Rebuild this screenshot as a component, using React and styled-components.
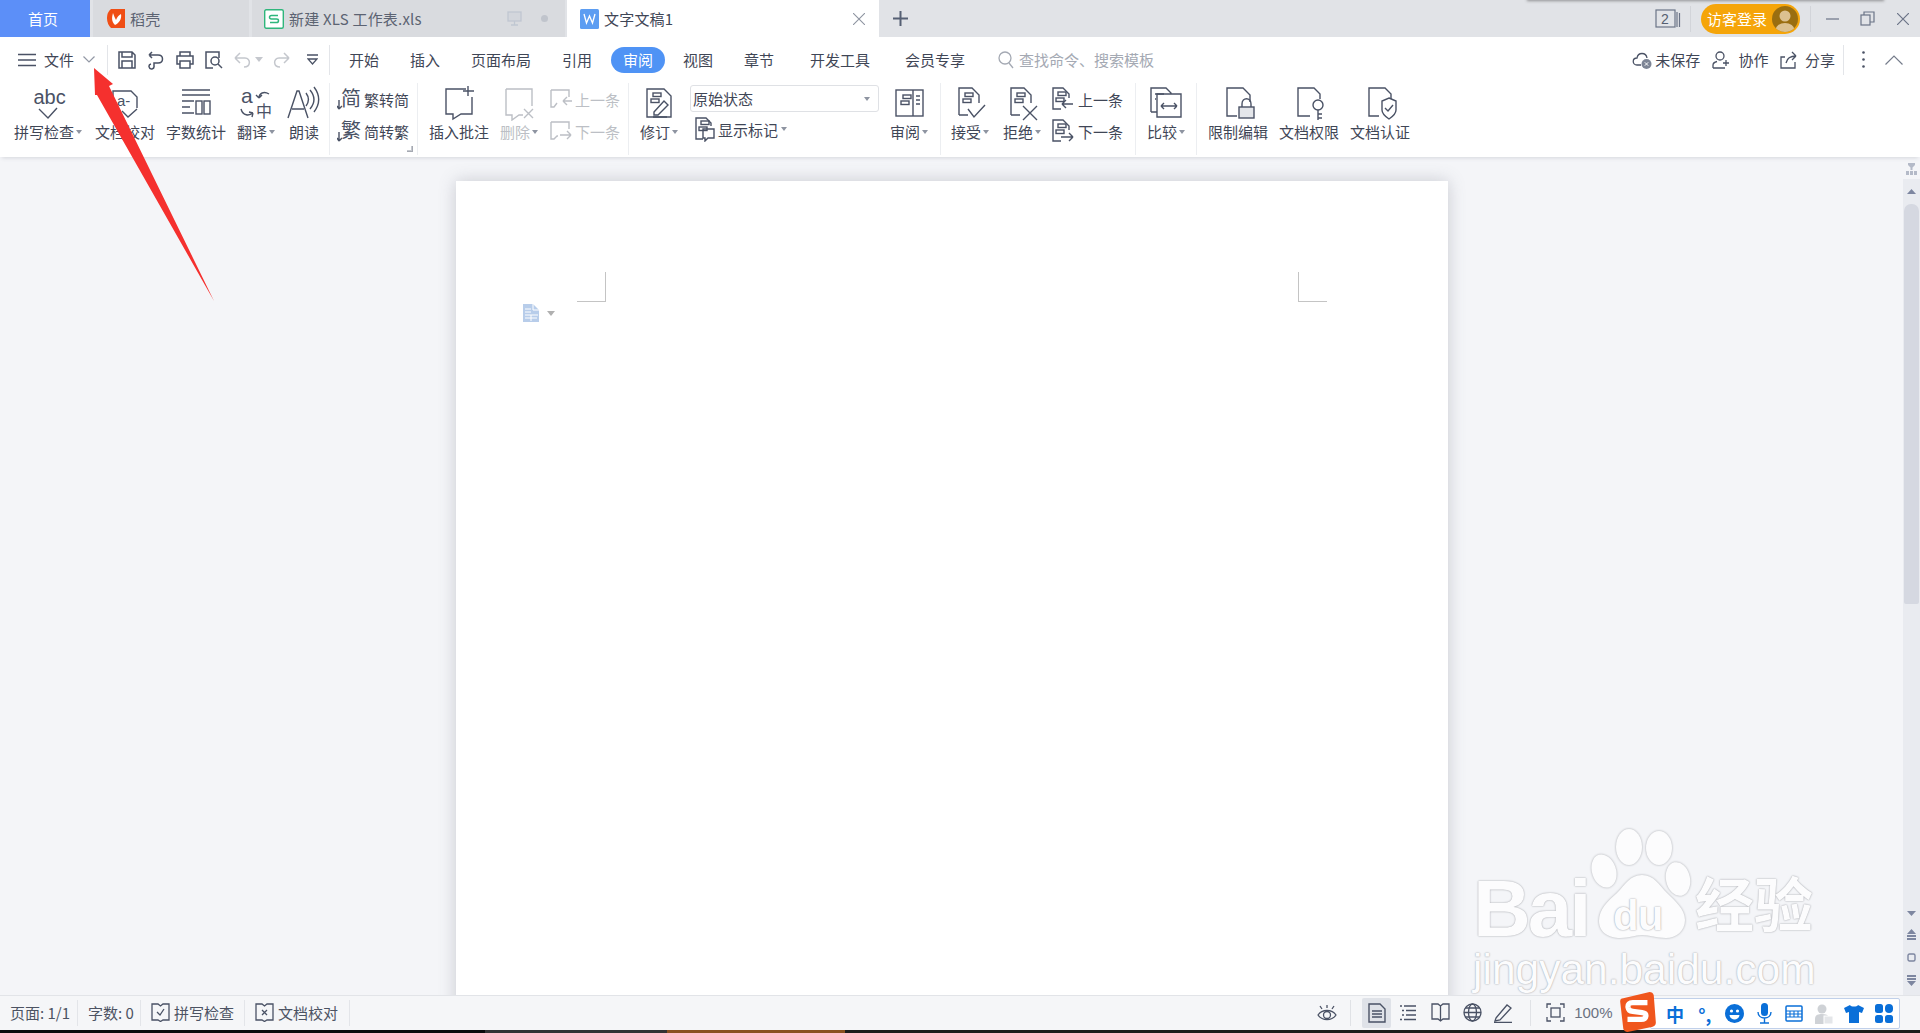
import React from 'react';
import styled, { createGlobalStyle } from 'styled-components';

const INK = '#4a5265';
const FAINT = '#bcbfc5';
const CJK = '"Noto Sans CJK SC", "Liberation Sans", sans-serif';

const GlobalStyle = createGlobalStyle`
  html, body { margin: 0; padding: 0; background: #f4f5f8; }
  body { font-family: ${CJK}; overflow: hidden; }
  svg { display: block; flex: none; }
`;

const Frame = styled.div`
  position: relative;
  width: 1920px;
  height: 1033px;
  display: flex;
  flex-direction: column;
  overflow: hidden;
  color: #3f4656;
  font-size: 15px;
`;

/* ---------- tab bar ---------- */
const TabBar = styled.div`
  height: 37px;
  flex: none;
  display: flex;
  align-items: stretch;
  background: #e1e3e7;
`;
const HomeTab = styled.div`
  width: 90px;
  box-sizing: border-box;
  padding-right: 4px;
  margin-right: 3px;
  background: #5c8ff8;
  color: #fff;
  display: flex;
  align-items: center;
  justify-content: center;
`;
const Tab = styled.div`
  width: ${p => p.$w}px;
  margin-right: ${p => p.$gap}px;
  padding-left: ${p => p.$pad}px;
  box-sizing: border-box;
  background: ${p => (p.$active ? '#fff' : '#d9dbdf')};
  color: ${p => (p.$active ? '#3f4656' : '#5c6372')};
  display: flex;
  align-items: center;
  gap: 5px;
  letter-spacing: 0.2px;
  white-space: nowrap;
`;
const TabTail = styled.div`
  margin-left: auto;
  display: flex;
  align-items: center;
  gap: ${p => p.$gap || 0}px;
  padding-right: ${p => p.$pad || 0}px;
`;
const NewTab = styled.div`
  margin-left: 14px;
  display: flex;
  align-items: center;
`;
const WindowTools = styled.div`
  margin-left: auto;
  display: flex;
  align-items: center;
`;
const BarDivider = styled.div`
  width: 1px;
  height: 26px;
  background: #d2d4d9;
  margin: 0 ${p => p.$right}px 0 ${p => p.$left}px;
`;
const LoginPill = styled.div`
  width: 99px;
  height: 30px;
  box-sizing: border-box;
  border-radius: 15px;
  background: #f5a50a;
  color: #fff;
  padding: 0 2px 0 6px;
  display: flex;
  align-items: center;
  justify-content: space-between;
`;
const Avatar = styled.div`
  width: 26px;
  height: 26px;
  border-radius: 50%;
  overflow: hidden;
`;
const WinButton = styled.div`
  width: 35px;
  display: flex;
  justify-content: center;
`;
const TopShadow = styled.div`
  position: absolute;
  left: 1527px;
  top: -3px;
  width: 357px;
  height: 3px;
  box-shadow: 0 1px 3px rgba(60, 60, 60, 0.5);
`;

/* ---------- menu row ---------- */
const MenuRow = styled.div`
  height: 41px;
  flex: none;
  box-sizing: border-box;
  background: #fff;
  display: flex;
  align-items: center;
  padding: 4px 17px 0 18px;
  white-space: nowrap;
`;
const MenuDivider = styled.div`
  width: 1px;
  height: 30px;
  background: #e3e5e9;
  margin-left: ${p => p.$left}px;
  margin-right: ${p => p.$right || 0}px;
`;
const FileLabel = styled.span`
  margin: 0 9px 0 8px;
`;
const QuickButton = styled.div`
  width: ${p => p.$w || 29}px;
  margin-left: ${p => p.$left || 0}px;
  display: flex;
  justify-content: center;
`;
const MenuTab = styled.div`
  width: ${p => p.$w}px;
  text-align: center;
`;
const ActivePill = styled.div`
  width: 54px;
  height: 26px;
  line-height: 26px;
  margin-left: 7px;
  border-radius: 13px;
  text-align: center;
  background: #4f93f5;
  color: #fff;
`;
const SearchBox = styled.div`
  margin-left: 21px;
  display: flex;
  align-items: center;
  gap: 5px;
  color: #a4a9b3;
`;
const MenuRight = styled.div`
  margin-left: auto;
  display: flex;
  align-items: center;
`;
const MenuAction = styled.div`
  display: flex;
  align-items: center;
  gap: 3px;
  margin-right: ${p => p.$right}px;
`;
const CollapseIcon = styled.svg`
  margin-left: 20px;
`;

/* ---------- ribbon ---------- */
const Ribbon = styled.div`
  height: 79px;
  flex: none;
  box-sizing: border-box;
  background: #fff;
  padding-left: 8px;
  display: flex;
  align-items: flex-start;
  position: relative;
  z-index: 2;
  box-shadow: 0 3px 4px -2px rgba(90, 95, 110, 0.2);
  white-space: nowrap;
`;
const RibbonButton = styled.div`
  width: ${p => p.$w}px;
  height: 72px;
  padding-top: 7px;
  display: flex;
  flex-direction: column;
  align-items: center;
  color: ${p => (p.$off ? FAINT : 'inherit')};
`;
const RibbonIcon = styled.div`
  height: 36px;
  display: flex;
  align-items: center;
  justify-content: center;
`;
const RibbonLabel = styled.div`
  height: 22px;
  line-height: 22px;
  display: flex;
  align-items: center;
  gap: 2px;
`;
const Caret = styled.i`
  width: 0;
  height: 0;
  border-left: 3.5px solid transparent;
  border-right: 3.5px solid transparent;
  border-top: 4px solid #8e94a1;
`;
const RibbonDivider = styled.div`
  width: 1px;
  height: 72px;
  margin-top: 5px;
  margin-left: ${p => p.$left || 0}px;
  background: #eceef1;
`;
const SmallColumn = styled.div`
  position: relative;
  width: ${p => p.$w}px;
  box-sizing: border-box;
  padding: 5px 0 0 ${p => p.$pad || 0}px;
`;
const SmallRow = styled.div`
  height: 32px;
  display: flex;
  align-items: center;
  gap: ${p => p.$gap ?? 3}px;
  color: ${p => (p.$off ? FAINT : 'inherit')};
`;
const CornerMark = styled.i`
  position: absolute;
  right: 4px;
  bottom: -5px;
  width: 5px;
  height: 5px;
  border-right: 1px solid #a5a9b2;
  border-bottom: 1px solid #a5a9b2;
  box-shadow: inset -1px -1px 0 #c5c8ce;
`;
const StateColumn = styled.div`
  width: 191px;
  box-sizing: border-box;
  padding: 7px 0 0 1px;
`;
const StateSelect = styled.div`
  width: 189px;
  height: 27px;
  box-sizing: border-box;
  border: 1px solid #dfe1e5;
  border-radius: 3px;
  padding: 0 8px 0 2px;
  display: flex;
  align-items: center;
  justify-content: space-between;
`;
const MarkRow = styled.div`
  height: 34px;
  padding-left: 3px;
  display: flex;
  align-items: center;
  gap: 3px;
`;

/* ---------- workspace ---------- */
const Workspace = styled.div`
  flex: 1;
  min-height: 0;
  display: flex;
  background: #f4f5f8;
`;
const PageArea = styled.div`
  flex: 1;
  display: flex;
  justify-content: center;
  padding-top: 24px;
  overflow: hidden;
`;
const Page = styled.div`
  position: relative;
  width: 992px;
  height: 1400px;
  background: #fff;
  box-shadow: 0 0 16px rgba(90, 95, 110, 0.28);
`;
const CornerLeft = styled.div`
  position: absolute;
  left: 121px;
  top: 91px;
  width: 28px;
  height: 29px;
  border-right: 1px solid #c4c4c4;
  border-bottom: 1px solid #c4c4c4;
`;
const CornerRight = styled.div`
  position: absolute;
  right: 121px;
  top: 91px;
  width: 28px;
  height: 29px;
  border-left: 1px solid #c4c4c4;
  border-bottom: 1px solid #c4c4c4;
`;
const ParaMark = styled.div`
  position: absolute;
  left: 67px;
  top: 123px;
  display: flex;
  align-items: center;
  gap: 8px;
`;
const ScrollColumn = styled.div`
  width: 17px;
  flex: none;
  display: flex;
  flex-direction: column;
  align-items: center;
`;
const SplitMark = styled.div`
  height: 22px;
  padding-top: 6px;
  box-sizing: border-box;
`;
const ScrollTrack = styled.div`
  flex: 1;
  width: 100%;
  background: #e9ebf0;
  display: flex;
  flex-direction: column;
  align-items: center;
`;
const ScrollArrow = styled.div`
  height: ${p => p.$h}px;
  display: flex;
  align-items: center;
  justify-content: center;
`;
const Thumb = styled.div`
  width: 15px;
  height: 400px;
  margin-bottom: ${p => p.$below}px;
  border-radius: 7px 7px 2px 2px;
  background: #d5d8e1;
`;

/* ---------- status bar ---------- */
const StatusBar = styled.div`
  height: 35px;
  flex: none;
  box-sizing: border-box;
  border-top: 1px solid #e2e4e8;
  background: #f5f6f8;
  padding-bottom: 1px;
  display: flex;
  align-items: center;
  color: #4c5363;
  white-space: nowrap;
`;
const StatusCell = styled.div`
  width: ${p => p.$w}px;
  height: 26px;
  box-sizing: border-box;
  padding-left: 10px;
  display: flex;
  align-items: center;
  gap: 4px;
  border-right: 1px solid #e3e5e9;
`;
const ViewTools = styled.div`
  margin-left: auto;
  width: 603px;
  display: flex;
  align-items: center;
`;
const ViewButton = styled.div`
  width: ${p => p.$w || 32}px;
  height: 30px;
  display: flex;
  align-items: center;
  justify-content: center;
  border-radius: 2px;
  background: ${p => (p.$active ? '#dfe2e8' : 'transparent')};
`;
const StatusDivider = styled.div`
  width: 1px;
  height: 26px;
  background: #e0e2e6;
  margin: 0 ${p => p.$right}px 0 ${p => p.$left}px;
`;
const Zoom100 = styled.span`
  margin-left: 5px;
  color: #6a7180;
  font-family: "Liberation Sans", sans-serif;
  font-size: 15px;
`;
const TaskStrip = styled.div`
  height: 3px;
  flex: none;
  display: flex;
  background: #0a0a0a;
`;
const StripPiece = styled.div`
  width: ${p => p.$w}px;
  background: ${p => p.$color};
`;

/* ---------- overlays ---------- */
const ImePanel = styled.div`
  position: absolute;
  left: 1650px;
  top: 998px;
  width: 250px;
  height: 31px;
  box-sizing: border-box;
  background: #fff;
  border: 1px solid #c0d0ea;
  border-radius: 2px;
  padding-left: 9px;
  display: flex;
  align-items: center;
  color: #0a6fd8;
  font-weight: 700;
  font-size: 18px;
`;
const ImeItem = styled.div`
  width: 30px;
  display: flex;
  justify-content: center;
`;
const SogouLogo = styled.div`
  position: absolute;
  left: 1618px;
  top: 991px;
`;
const RedArrow = styled.svg`
  position: absolute;
  left: 0;
  top: 0;
  z-index: 5;
`;
const Watermark = styled.div`
  position: absolute;
  left: 1470px;
  top: 825px;
  width: 360px;
  height: 165px;
  z-index: 3;
  color: #fcfcfd;
  text-shadow: 0 0 2px #a9abb0, 0 0 1px #b9bbc0;
  font-family: "Liberation Sans", sans-serif;
  font-weight: 700;
  line-height: 1;
`;
const PawDrawing = styled.svg`
  position: absolute;
  left: 0;
  top: 0;
  filter: drop-shadow(0 0 1.2px #a9abb0);
`;
const MarkBai = styled.span`
  position: absolute;
  left: 3px;
  top: 44px;
  font-size: 80px;
  letter-spacing: -3px;
`;
const MarkDu = styled.span`
  position: absolute;
  left: 143px;
  top: 70px;
  font-size: 42px;
  letter-spacing: -1px;
`;
const MarkCn = styled.span`
  position: absolute;
  left: 225px;
  top: 47px;
  font-family: ${CJK};
  font-size: 59px;
`;
const MarkUrl = styled.span`
  position: absolute;
  left: 3px;
  top: 124px;
  font-size: 42.5px;
  font-weight: 400;
`;

/* ---------- icons ---------- */
const Line = ({ w = 24, h = 24, c = INK, sw = 1.4, children }) => (
  <svg width={w} height={h} viewBox={`0 0 ${w} ${h}`} fill="none" stroke={c} strokeWidth={sw}>
    {children}
  </svg>
);
const GlyphText = ({ x, y, size, children, fill = INK }) => (
  <text x={x} y={y} fontSize={size} fill={fill} stroke="none" fontFamily={'"Liberation Sans", "Noto Sans CJK SC", sans-serif'}>
    {children}
  </text>
);
const Chip = ({ x, y, c = INK }) => (
  <>
    <rect x={x} y={y} width="8" height="3.5" stroke={c} />
    <rect x={x - 2} y={y + 6} width="8" height="3.5" stroke={c} />
  </>
);
const DocBody = ({ x = 9, r = 29, c = INK }) => (
  <path d={`M${x} 30V3H${r - 7}L${r} 10V18M${x} 30H${x + 9}`} stroke={c} />
);

const SpellIcon = () => (
  <Line w={40} h={36}>
    <GlyphText x={5.5} y={19} size={20}>abc</GlyphText>
    <path d="M11 24L20 33L29 23" />
  </Line>
);
const ProofIcon = () => (
  <Line w={40} h={36}>
    <path d="M11 30H8V6H26L32 12V23" />
    <GlyphText x={12} y={21} size={15}>a-</GlyphText>
    <path d="M17 26L23 32L32 24" />
  </Line>
);
const CountIcon = () => (
  <Line w={40} h={36}>
    <path d="M6 5H34M6 10H34M6 16H18M6 22H14M6 28H18" />
    <rect x="20" y="16" width="6" height="13" />
    <rect x="28" y="16" width="6" height="13" />
  </Line>
);
const TranslateIcon = () => (
  <Line w={40} h={36}>
    <GlyphText x={5} y={18} size={21}>a</GlyphText>
    <path d="M23 13C23 8 28 6 33 9M23 13L20 10M23 13L26 10M5 24C7 31 13 31 17 28M17 28L13 27M17 28L16 32" />
    <GlyphText x={20} y={32} size={16}>中</GlyphText>
  </Line>
);
const ReadIcon = () => (
  <Line w={40} h={36}>
    <path d="M4 33L13 6H15L24 33M8 24H20" />
    <path d="M22 8C25 12 25 17 22 21M26 5C31 11 31 18 26 24M30 2C36 10 36 19 30 27" />
  </Line>
);
const ConvertIcon = ({ glyph }) => (
  <Line w={24} h={26}>
    <GlyphText x={4} y={20} size={20}>{glyph}</GlyphText>
    <path d="M2 14V23M2 23L0 20M2 23L5 20" />
  </Line>
);
const CommentAddIcon = ({ c = INK }) => (
  <Line w={40} h={36} c={c}>
    <path d="M27 4H7V29H14V34L22 29H33V12" />
    <path d="M29 1V11M24 6H35" />
  </Line>
);
const CommentDelIcon = ({ c = FAINT }) => (
  <Line w={40} h={36} c={c}>
    <path d="M7 4H33V21M7 4V30H13V35L20 30H24" />
    <path d="M25 24L34 33M34 24L25 33" />
  </Line>
);
const PrevCommentIcon = ({ c = FAINT }) => (
  <Line w={26} h={24} c={c}>
    <path d="M3 3H21V10M3 3V20H6L9 16M15 14H24M15 14L19 10M15 14L19 18" />
  </Line>
);
const NextCommentIcon = ({ c = FAINT }) => (
  <Line w={26} h={24} c={c}>
    <path d="M3 3H21V10M3 3V20H6L9 17H10M12 16H23M23 16L19 12M23 16L19 20" />
  </Line>
);
const TrackIcon = () => (
  <Line w={40} h={36}>
    <path d="M8 32V4H25L32 11V32Z" />
    <Chip x={14} y={8} />
    <path d="M15 27L25 16L29 20L19 30H15ZM14 32H28" />
  </Line>
);
const PaneIcon = () => (
  <Line w={40} h={36}>
    <rect x="7" y="5" width="27" height="26" />
    <path d="M24 5V31M27 11H31M27 15H31M27 19H31" />
    <Chip x={14} y={10} />
  </Line>
);
const AcceptIcon = () => (
  <Line w={40} h={36}>
    <DocBody />
    <Chip x={15} y={8} />
    <path d="M18 24L24 32L35 20" />
  </Line>
);
const RejectIcon = () => (
  <Line w={40} h={36}>
    <DocBody />
    <Chip x={15} y={8} />
    <path d="M21 21L35 35M35 21L21 35" />
  </Line>
);
const DocPrevIcon = () => (
  <Line w={26} h={26}>
    <path d="M12 23H4V2H14L20 8V12" />
    <Chip x={9} y={6} />
    <path d="M13 18H24M13 18L17 14M13 18L17 22" />
  </Line>
);
const DocNextIcon = () => (
  <Line w={26} h={26}>
    <path d="M12 23H4V2H14L20 8V12" />
    <Chip x={9} y={6} />
    <path d="M12 19H24M24 19L20 15M24 19L20 23" />
  </Line>
);
const CompareIcon = () => (
  <Line w={40} h={36}>
    <path d="M5 27V3H20L25 8V9M11 27H5M11 27V9H35V32H11Z" />
    <path d="M9 9H18M9 14H10M15 21H31M15 21L18 18M15 21L18 24M31 21L28 18M31 21L28 24" />
  </Line>
);
const LockIcon = () => (
  <Line w={40} h={36}>
    <path d="M19 31H9V3H25L32 10V17" />
    <path d="M24 22V19C24 12 33 12 33 19V22" />
    <rect x="21" y="22" width="15" height="11" fill="#e4e6ea" />
  </Line>
);
const KeyIcon = () => (
  <Line w={40} h={36}>
    <path d="M21 31H9V3H25L31 9V14" />
    <circle cx="29" cy="20" r="5" />
    <path d="M29 25V35M29 29H33M29 33H33" />
  </Line>
);
const ShieldIcon = () => (
  <Line w={40} h={36}>
    <path d="M19 31H9V3H25L31 9V14" />
    <path d="M29 13L36 16V25C36 29 32 32 29 34C26 32 22 29 22 25V16Z" />
    <path d="M25 23L28 26L33 20" />
  </Line>
);
const MarkIcon = () => (
  <Line w={22} h={26}>
    <path d="M10 23H3V2H13L18 7V10" />
    <Chip x={8} y={5} />
    <path d="M10 13H21V22H15L12 25V22H10Z" />
  </Line>
);
const CaretSmall = ({ c = '#9aa0ab' }) => (
  <svg width="8" height="5" viewBox="0 0 8 5"><path d="M0 0H8L4 5Z" fill={c} /></svg>
);

const SogouS = () => (
  <svg width="40" height="42" viewBox="0 0 38 40">
    <path d="M5 7L30 1Q33 1 34 4L36 30Q36 33 33 34L9 39Q6 39 5 36L2 10Q2 7 5 7Z" fill="#f0561d" />
    <path d="M28 11H14Q9 11 9.500 15.500Q10 19 14 19.500L23 20.500Q27 21 26.500 24Q26 27 22 27H9" fill="none" stroke="#fff" strokeWidth="5" />
  </svg>
);

const App = () => (
  <Frame>
    <GlobalStyle />

    <TabBar>
      <HomeTab>首页</HomeTab>
      <Tab $w={156} $gap={3} $pad={14}>
        <svg width="18" height="19" viewBox="0 0 18 19">
          <path d="M4 0H18V19H4Q0 15 0 9Q0 3 4 0Z" fill="#f04e15" />
          <path d="M8 16C4 12 5 8 6 4C7 7 8 9 9 11C10 8 12 6 14 5C15 10 12 14 8 16Z" fill="#fff" />
        </svg>
        稻壳
      </Tab>
      <Tab $w={313} $gap={2} $pad={12}>
        <svg width="20" height="20" viewBox="0 0 20 20">
          <rect x="0.700" y="0.700" width="18.600" height="18.600" rx="1.500" fill="#fff" stroke="#2fb67c" strokeWidth="1.400" />
          <path d="M14 6.500H7.500Q5.500 6.500 5.500 8.300Q5.500 10 7.500 10H12.500Q14.500 10 14.500 11.700Q14.500 13.500 12.500 13.500H6" fill="none" stroke="#2fb67c" strokeWidth="1.500" />
        </svg>
        新建 XLS 工作表.xls
        <TabTail $gap={19} $pad={17}>
          <svg width="15" height="15" viewBox="0 0 15 15" fill="none" stroke="#c0c7d2" strokeWidth="1.300">
            <rect x="1" y="1" width="13" height="9" fill="#d3d6dc" />
            <path d="M7.500 10V14M4 14H11" />
          </svg>
          <svg width="7" height="7" viewBox="0 0 7 7"><circle cx="3.500" cy="3.500" r="3.500" fill="#c0c4cc" /></svg>
        </TabTail>
      </Tab>
      <Tab $w={312} $gap={0} $pad={13} $active>
        <svg width="19" height="20" viewBox="0 0 19 20">
          <rect width="19" height="20" rx="1.500" fill="#5c9df2" />
          <path d="M4 5L6.500 14L9.500 7L12.500 14L15 5" fill="none" stroke="#fff" strokeWidth="1.300" />
        </svg>
        文字文稿1
        <TabTail $pad={14}>
          <svg width="12" height="12" viewBox="0 0 12 12" stroke="#8e94a1" strokeWidth="1.100"><path d="M0 0L12 12M12 0L0 12" /></svg>
        </TabTail>
      </Tab>
      <NewTab>
        <svg width="15" height="15" viewBox="0 0 15 15" stroke="#566074" strokeWidth="2"><path d="M7.500 0V15M0 7.500H15" /></svg>
      </NewTab>
      <WindowTools>
        <svg width="26" height="19" viewBox="0 0 26 19" fill="none" stroke="#6b7487" strokeWidth="1.200">
          <rect x="1" y="1" width="19" height="17" />
          <path d="M22 3V18M24.500 4V18" />
          <GlyphText x={6} y={15} size={14} fill="#555e70">2</GlyphText>
        </svg>
        <BarDivider $left={9} $right={10} />
        <LoginPill>
          访客登录
          <Avatar>
            <svg width="26" height="26" viewBox="0 0 26 26">
              <rect width="26" height="26" fill="#9a6e10" />
              <circle cx="13" cy="10" r="5.500" fill="#dcc190" />
              <ellipse cx="13" cy="24" rx="9.500" ry="7" fill="#dcc190" />
            </svg>
          </Avatar>
        </LoginPill>
        <BarDivider $left={10} $right={4} />
        <WinButton>
          <svg width="13" height="2" viewBox="0 0 13 2"><path d="M0 1H13" stroke="#6b7487" strokeWidth="1.200" /></svg>
        </WinButton>
        <WinButton>
          <svg width="15" height="15" viewBox="0 0 15 15" fill="none" stroke="#6b7487" strokeWidth="1.200">
            <rect x="1" y="4" width="9" height="10" />
            <path d="M4 4V1H14V11H10" />
          </svg>
        </WinButton>
        <WinButton>
          <svg width="12" height="12" viewBox="0 0 12 12" stroke="#6b7487" strokeWidth="1.200"><path d="M0 0L12 12M12 0L0 12" /></svg>
        </WinButton>
      </WindowTools>
    </TabBar>
    <TopShadow />

    <MenuRow>
      <svg width="18" height="14" viewBox="0 0 18 14" stroke={INK} strokeWidth="1.300"><path d="M0 1.500H18M0 7H18M0 12.500H18" /></svg>
      <FileLabel>文件</FileLabel>
      <svg width="12" height="7" viewBox="0 0 12 7" fill="none" stroke="#9298a5" strokeWidth="1.200"><path d="M0.500 0.500L6 6L11.500 0.500" /></svg>
      <MenuDivider $left={12} $right={4} />
      <QuickButton>
        <Line w={18} h={18} sw={1.500}><path d="M1 1H14L17 4V17H1ZM4 1V6H14V1M4 17V10H14V17" /></Line>
      </QuickButton>
      <QuickButton>
        <Line w={18} h={20} sw={1.500}><path d="M2 5H11C17 5 17 13 11 13H7V16A2.500 2.500 0 1 1 4 14M2 5L5 2M2 5L5 8" /></Line>
      </QuickButton>
      <QuickButton>
        <Line w={18} h={18} sw={1.500}><path d="M4 5V1H14V5M4 13H1V5H17V13H14M4 10H14V17H4Z" /></Line>
      </QuickButton>
      <QuickButton>
        <Line w={19} h={18} sw={1.500}><path d="M9 17H2V1H15V7" /><circle cx="11" cy="10" r="4" /><path d="M14 13L18 17" /></Line>
      </QuickButton>
      <QuickButton $left={3} $w={24}>
        <Line w={18} h={18} c="#c4c7cd" sw={1.500}><path d="M1 7L6 2M1 7L6 12M1 7H11C17 7 17 16 10 16" /></Line>
      </QuickButton>
      <QuickButton $w={7}><CaretSmall c="#c4c7cd" /></QuickButton>
      <QuickButton $left={8} $w={22}>
        <Line w={18} h={18} c="#c4c7cd" sw={1.500}><path d="M17 7L12 2M17 7L12 12M17 7H7C1 7 1 16 8 16" /></Line>
      </QuickButton>
      <QuickButton $left={10} $w={20}>
        <svg width="11" height="11" viewBox="0 0 11 11" fill="none" stroke={INK} strokeWidth="1.300"><path d="M0 1H11M1 5H10L5.500 10Z" /></svg>
      </QuickButton>
      <MenuDivider $left={7} />
      <MenuTab $w={68}>开始</MenuTab>
      <MenuTab $w={54}>插入</MenuTab>
      <MenuTab $w={98}>页面布局</MenuTab>
      <MenuTab $w={54}>引用</MenuTab>
      <ActivePill>审阅</ActivePill>
      <MenuTab $w={66}>视图</MenuTab>
      <MenuTab $w={56}>章节</MenuTab>
      <MenuTab $w={106}>开发工具</MenuTab>
      <MenuTab $w={84}>会员专享</MenuTab>
      <SearchBox>
        <svg width="16" height="18" viewBox="0 0 16 18" fill="none" stroke="#a4a9b3" strokeWidth="1.300"><circle cx="7" cy="7" r="6" /><path d="M11 12L15 17" /></svg>
        查找命令、搜索模板
      </SearchBox>
      <MenuRight>
        <MenuAction $right={12}>
          <svg width="20" height="20" viewBox="0 0 20 20" fill="none" stroke={INK} strokeWidth="1.300">
            <path d="M9 15H5C0 15 0 8 5 8C6 2 14 2 15 8" />
            <circle cx="14.500" cy="14" r="5" fill="#7d8595" stroke="none" />
            <path d="M12.800 12.300L16.200 15.700M16.200 12.300L12.800 15.700" stroke="#fff" strokeWidth="1" />
          </svg>
          未保存
        </MenuAction>
        <MenuAction $right={10}>
          <svg width="20" height="20" viewBox="0 0 20 20" fill="none" stroke={INK} strokeWidth="1.300">
            <circle cx="8" cy="6" r="4" />
            <path d="M1 18V15C1 13 3 12 5 11.500M1 18H13M14 10V16M11 13H17" />
          </svg>
          <span>&nbsp;协作</span>
        </MenuAction>
        <MenuAction $right={8}>
          <svg width="20" height="20" viewBox="0 0 20 20" fill="none" stroke={INK} strokeWidth="1.300">
            <path d="M6 7H2V18H16V12M7 13C8 8 11 6 17 6M17 6L13 2M17 6L13 10" />
          </svg>
          <span>&nbsp;分享</span>
        </MenuAction>
        <MenuDivider $left={0} $right={18} />
        <svg width="3" height="17" viewBox="0 0 3 17" fill={INK}><circle cx="1.500" cy="1.500" r="1.300" /><circle cx="1.500" cy="8.500" r="1.300" /><circle cx="1.500" cy="15.500" r="1.300" /></svg>
        <CollapseIcon width="18" height="10" viewBox="0 0 18 10" fill="none" stroke="#757c8b" strokeWidth="1.200"><path d="M0.500 9.500L9 1L17.500 9.500" /></CollapseIcon>
      </MenuRight>
    </MenuRow>

    <Ribbon>
      <RibbonButton $w={80}><RibbonIcon><SpellIcon /></RibbonIcon><RibbonLabel>拼写检查<Caret /></RibbonLabel></RibbonButton>
      <RibbonButton $w={74}><RibbonIcon><ProofIcon /></RibbonIcon><RibbonLabel>文档校对</RibbonLabel></RibbonButton>
      <RibbonButton $w={68}><RibbonIcon><CountIcon /></RibbonIcon><RibbonLabel>字数统计</RibbonLabel></RibbonButton>
      <RibbonButton $w={52}><RibbonIcon><TranslateIcon /></RibbonIcon><RibbonLabel>翻译<Caret /></RibbonLabel></RibbonButton>
      <RibbonButton $w={44}><RibbonIcon><ReadIcon /></RibbonIcon><RibbonLabel>朗读</RibbonLabel></RibbonButton>
      <RibbonDivider $left={3} />
      <SmallColumn $w={87} $pad={7}>
        <SmallRow><ConvertIcon glyph="简" />繁转简</SmallRow>
        <SmallRow><ConvertIcon glyph="繁" />简转繁</SmallRow>
        <CornerMark />
      </SmallColumn>
      <RibbonDivider />
      <RibbonButton $w={82}><RibbonIcon><CommentAddIcon /></RibbonIcon><RibbonLabel>插入批注</RibbonLabel></RibbonButton>
      <RibbonButton $w={38} $off><RibbonIcon><CommentDelIcon /></RibbonIcon><RibbonLabel>删除<Caret /></RibbonLabel></RibbonButton>
      <SmallColumn $w={90} $pad={10}>
        <SmallRow $off $gap={1}><PrevCommentIcon />上一条</SmallRow>
        <SmallRow $off $gap={1}><NextCommentIcon />下一条</SmallRow>
      </SmallColumn>
      <RibbonDivider />
      <RibbonButton $w={60}><RibbonIcon><TrackIcon /></RibbonIcon><RibbonLabel>修订<Caret /></RibbonLabel></RibbonButton>
      <StateColumn>
        <StateSelect>原始状态<Caret /></StateSelect>
        <MarkRow><MarkIcon />显示标记<Caret /></MarkRow>
      </StateColumn>
      <RibbonButton $w={58}><RibbonIcon><PaneIcon /></RibbonIcon><RibbonLabel>审阅<Caret /></RibbonLabel></RibbonButton>
      <RibbonDivider $left={2} />
      <RibbonButton $w={58}><RibbonIcon><AcceptIcon /></RibbonIcon><RibbonLabel>接受<Caret /></RibbonLabel></RibbonButton>
      <RibbonButton $w={46}><RibbonIcon><RejectIcon /></RibbonIcon><RibbonLabel>拒绝<Caret /></RibbonLabel></RibbonButton>
      <SmallColumn $w={90} $pad={4}>
        <SmallRow><DocPrevIcon />上一条</SmallRow>
        <SmallRow><DocNextIcon />下一条</SmallRow>
      </SmallColumn>
      <RibbonDivider />
      <RibbonButton $w={60}><RibbonIcon><CompareIcon /></RibbonIcon><RibbonLabel>比较<Caret /></RibbonLabel></RibbonButton>
      <RibbonDivider />
      <RibbonButton $w={82}><RibbonIcon><LockIcon /></RibbonIcon><RibbonLabel>限制编辑</RibbonLabel></RibbonButton>
      <RibbonButton $w={60}><RibbonIcon><KeyIcon /></RibbonIcon><RibbonLabel>文档权限</RibbonLabel></RibbonButton>
      <RibbonButton $w={82}><RibbonIcon><ShieldIcon /></RibbonIcon><RibbonLabel>文档认证</RibbonLabel></RibbonButton>
    </Ribbon>

    <Workspace>
      <PageArea>
        <Page>
          <CornerLeft />
          <CornerRight />
          <ParaMark>
            <svg width="16" height="18" viewBox="0 0 16 18">
              <path d="M0 0H10L16 6V18H0Z" fill="#b8cdea" />
              <path d="M10 0V6H16M2 5H8M2 8H8M2 11H15M2 14H14M8 11V17" fill="none" stroke="#fff" strokeWidth="1" />
            </svg>
            <CaretSmall c="#b0b0b0" />
          </ParaMark>
        </Page>
      </PageArea>
      <ScrollColumn>
        <SplitMark>
          <svg width="11" height="12" viewBox="0 0 11 12" fill="#b4bac8">
            <path d="M2 0H9V2L6.500 4.500V7H4.500V4.500L2 2Z" />
            <rect x="0" y="8" width="3" height="4" />
            <rect x="4" y="8" width="3" height="4" />
            <rect x="8" y="8" width="3" height="4" />
          </svg>
        </SplitMark>
        <ScrollTrack>
          <ScrollArrow $h={25}><svg width="9" height="5" viewBox="0 0 9 5"><path d="M4.500 0L9 5H0Z" fill="#7d86a0" /></svg></ScrollArrow>
          <Thumb $below={300} />
          <ScrollArrow $h={19}><svg width="9" height="5" viewBox="0 0 9 5"><path d="M0 0H9L4.500 5Z" fill="#7d86a0" /></svg></ScrollArrow>
          <ScrollArrow $h={23}><svg width="9" height="11" viewBox="0 0 9 11" fill="#7d86a0"><path d="M4.500 0L9 5H0ZM0 6H9V8H0ZM0 9H9V11H0Z" /></svg></ScrollArrow>
          <ScrollArrow $h={23}><svg width="9" height="9" viewBox="0 0 9 9" fill="none" stroke="#7d86a0" strokeWidth="1.400"><rect x="1" y="1" width="7" height="7" rx="1.500" /></svg></ScrollArrow>
          <ScrollArrow $h={23}><svg width="9" height="11" viewBox="0 0 9 11" fill="#7d86a0"><path d="M0 0H9V2H0ZM0 3H9V5H0ZM0 6H9L4.500 11Z" /></svg></ScrollArrow>
        </ScrollTrack>
      </ScrollColumn>
    </Workspace>

    <StatusBar>
      <StatusCell $w={78}>页面: 1/1</StatusCell>
      <StatusCell $w={63}>字数: 0</StatusCell>
      <StatusCell $w={104}>
        <svg width="19" height="19" viewBox="0 0 19 19" fill="none" stroke={INK} strokeWidth="1.300">
          <path d="M1 1H7L9.500 3L12 1H18V17H12L9.500 18.500L7 17H1Z" />
          <path d="M6 9L9 12L13 6" />
        </svg>
        拼写检查
      </StatusCell>
      <StatusCell $w={105}>
        <svg width="19" height="19" viewBox="0 0 19 19" fill="none" stroke={INK} strokeWidth="1.300">
          <path d="M1 1H7L9.500 3L12 1H18V17H12L9.500 18.500L7 17H1Z" />
          <path d="M7 7L12 12M12 7L7 12" />
        </svg>
        文档校对
      </StatusCell>
      <ViewTools>
        <ViewButton $w={20}>
          <svg width="20" height="20" viewBox="0 0 20 20" fill="none" stroke={INK} strokeWidth="1.300">
            <path d="M1 12C5 6 15 6 19 12C15 18 5 18 1 12Z" />
            <circle cx="10" cy="12" r="3.500" />
            <path d="M10 2V5M3 3L5 6M17 3L15 6" />
          </svg>
        </ViewButton>
        <StatusDivider $left={13} $right={11} />
        <ViewButton $active $w={29}>
          <svg width="18" height="20" viewBox="0 0 18 20" fill="none" stroke={INK} strokeWidth="1.400">
            <path d="M1 1H12L17 6V19H1ZM4 8H14M4 11H14M4 14H14" />
          </svg>
        </ViewButton>
        <ViewButton $w={34}>
          <svg width="18" height="16" viewBox="0 0 18 16" fill="none" stroke={INK} strokeWidth="1.300"><path d="M1 1H3M5 1H17M3 5.500H5M7 5.500H17M3 10H5M7 10H17M1 14.500H3M5 14.500H17" /></svg>
        </ViewButton>
        <ViewButton $w={31}>
          <svg width="19" height="19" viewBox="0 0 19 19" fill="none" stroke={INK} strokeWidth="1.300"><path d="M9.500 3L7 1H1V16H7L9.500 18L12 16H18V1H12ZM9.500 3V18" /></svg>
        </ViewButton>
        <ViewButton>
          <svg width="19" height="19" viewBox="0 0 19 19" fill="none" stroke={INK} strokeWidth="1.300">
            <circle cx="9.500" cy="9.500" r="8.500" />
            <ellipse cx="9.500" cy="9.500" rx="4" ry="8.500" />
            <path d="M1 9.500H18M2.500 5H16.500M2.500 14H16.500" />
          </svg>
        </ViewButton>
        <ViewButton>
          <svg width="20" height="20" viewBox="0 0 20 20" fill="none" stroke={INK} strokeWidth="1.300"><path d="M2 15L13 2L17 5L6 17L1 18ZM0 19.500H18" /></svg>
        </ViewButton>
        <StatusDivider $left={10} $right={15} />
        <svg width="19" height="19" viewBox="0 0 19 19" fill="none" stroke={INK} strokeWidth="1.300">
          <path d="M1 5V1H5M14 1H18V5M1 14V18H5M14 18H18V14" />
          <rect x="5" y="5" width="9" height="9" />
        </svg>
        <Zoom100>&nbsp;100%</Zoom100>
      </ViewTools>
    </StatusBar>
    <TaskStrip>
      <StripPiece $w={485} $color="#0a0a0a" />
      <StripPiece $w={182} $color="#333333" />
      <StripPiece $w={178} $color="#8a5020" />
      <StripPiece $w={1075} $color="#1c1c1c" />
    </TaskStrip>

    <ImePanel>
      <ImeItem>中</ImeItem>
      <ImeItem>°,</ImeItem>
      <ImeItem>
        <svg width="19" height="19" viewBox="0 0 19 19"><circle cx="9.500" cy="9.500" r="9.500" fill="#0a6fd8" /><circle cx="6.500" cy="7" r="1.600" fill="#fff" /><circle cx="12.500" cy="7" r="1.600" fill="#fff" /><path d="M4.500 11H14.500C14 17 5 17 4.500 11Z" fill="#fff" /></svg>
      </ImeItem>
      <ImeItem>
        <svg width="15" height="21" viewBox="0 0 15 21"><rect x="4" y="0" width="7" height="13" rx="3.500" fill="#0a6fd8" /><path d="M1 9C1 17 14 17 14 9M7.500 15V20M3 20H12" fill="none" stroke="#0a6fd8" strokeWidth="1.400" /></svg>
      </ImeItem>
      <ImeItem>
        <svg width="18" height="17" viewBox="0 0 18 17" fill="none" stroke="#0a6fd8" strokeWidth="1.500"><rect x="1" y="1" width="16" height="15" rx="1" /><path d="M1 6H17M1 9H17M1 12H17M5 6V12M9 6V12M13 6V12" strokeWidth="1.100" /></svg>
      </ImeItem>
      <ImeItem>
        <svg width="18" height="20" viewBox="0 0 18 20"><circle cx="7" cy="5" r="4.500" fill="#cfd2d6" /><path d="M0 20V15C0 11 3 10 7 10C11 10 13 11 14 13V20Z" fill="#cfd2d6" /><rect x="9" y="12" width="9" height="8" fill="#e4e6e9" stroke="#fff" /></svg>
      </ImeItem>
      <ImeItem>
        <svg width="20" height="18" viewBox="0 0 20 18"><path d="M6 0C7 2 13 2 14 0L20 3L18 8L15 7V18H5V7L2 8L0 3Z" fill="#0a6fd8" /></svg>
      </ImeItem>
      <ImeItem>
        <svg width="18" height="19" viewBox="0 0 18 19" fill="#0a6fd8"><rect width="8" height="9" rx="2.500" /><rect x="10" width="8" height="9" rx="4" /><rect y="11" width="8" height="8" rx="2.500" /><rect x="10" y="11" width="8" height="8" rx="2.500" /></svg>
      </ImeItem>
    </ImePanel>
    <SogouLogo><SogouS /></SogouLogo>

    <Watermark>
      <PawDrawing width="360" height="165" viewBox="0 0 360 165" fill="#fcfcfd">
        <ellipse cx="159" cy="22" rx="13" ry="18" />
        <ellipse cx="189" cy="23" rx="13" ry="17" />
        <ellipse cx="134" cy="46" rx="12" ry="17" transform="rotate(-18 134 46)" />
        <ellipse cx="208" cy="54" rx="12" ry="17" transform="rotate(-12 208 54)" />
        <path d="M172 50C160 50 155 60 147 68C138 76 129 84 129 96C129 108 140 113 150 113C160 113 165 110 172 110C180 110 186 113 196 113C206 113 215 106 215 95C215 84 205 76 197 68C189 60 184 50 172 50Z" />
      </PawDrawing>
      <MarkBai>Bai</MarkBai>
      <MarkDu>du</MarkDu>
      <MarkCn>经验</MarkCn>
      <MarkUrl>jingyan.baidu.com</MarkUrl>
    </Watermark>

    <RedArrow width="260" height="320" viewBox="0 0 260 320">
      <path d="M94 68L113 84L109 86L214 301L97 95L95 95Z" fill="#f5302e" />
    </RedArrow>
  </Frame>
);

export default App;
